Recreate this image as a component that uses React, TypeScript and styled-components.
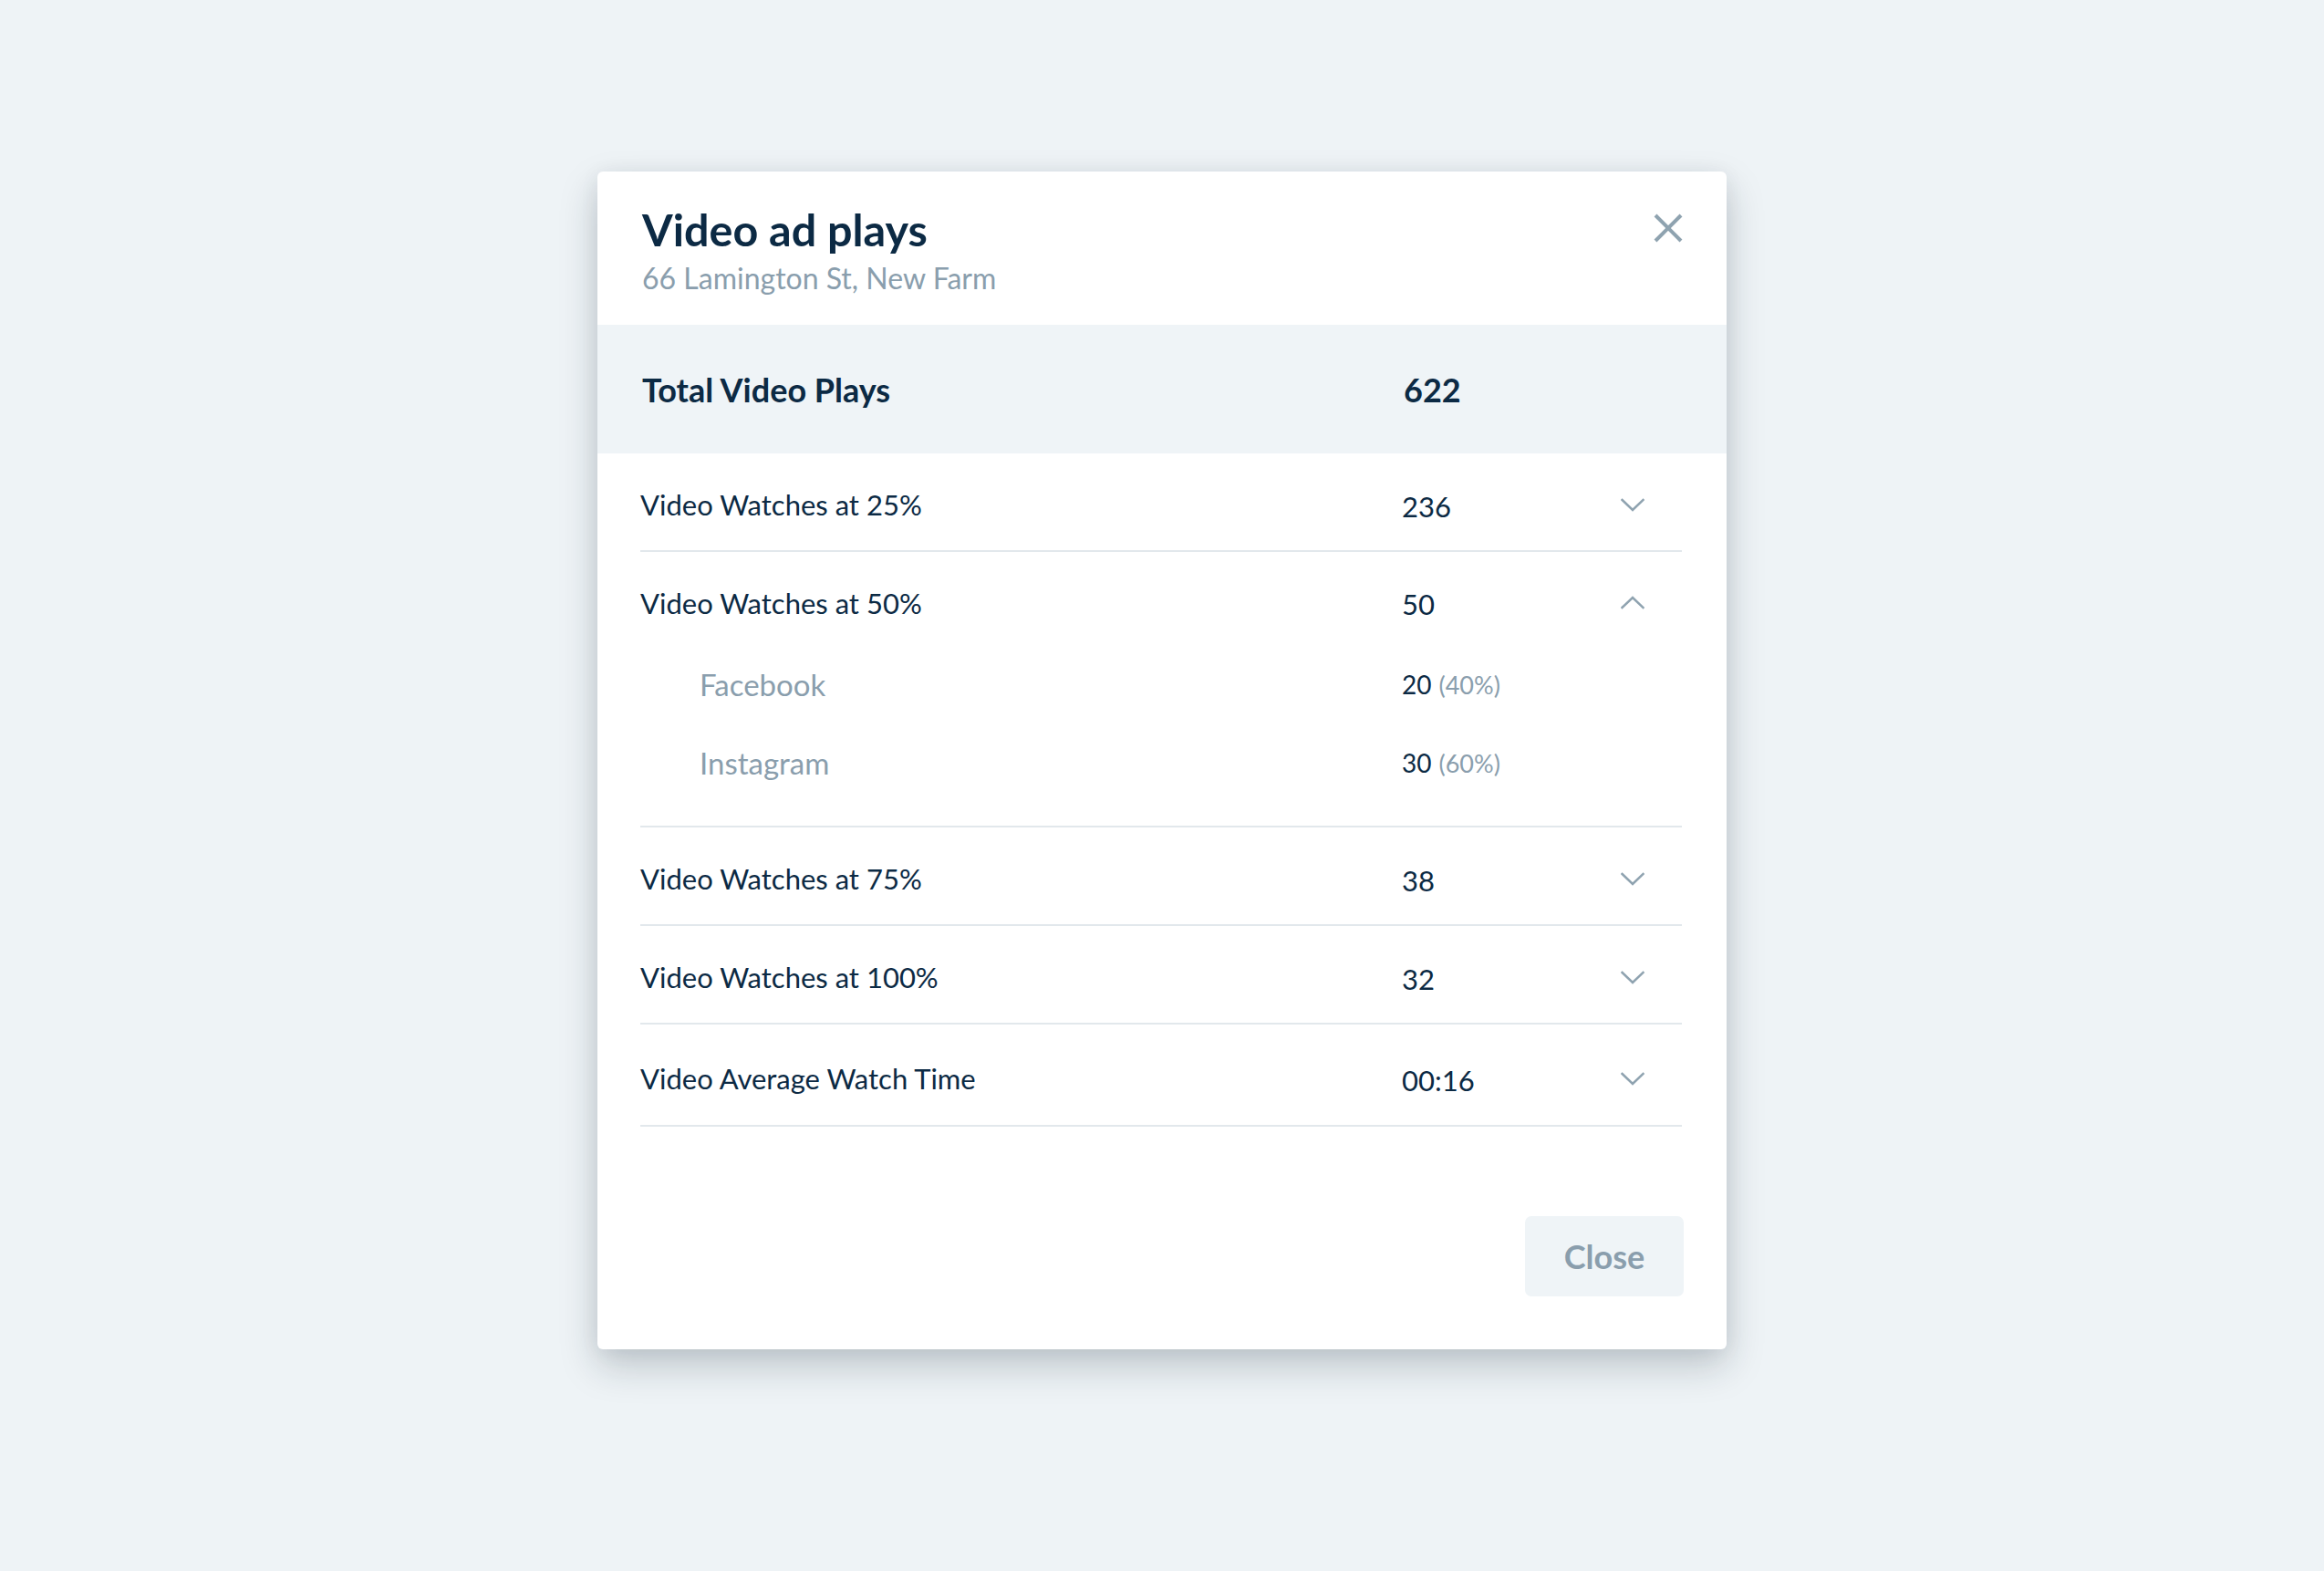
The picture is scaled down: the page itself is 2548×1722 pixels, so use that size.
import React from "react";
import styled, { createGlobalStyle } from "styled-components";

const GlobalStyle = createGlobalStyle`
  html, body {
    margin: 0;
    padding: 0;
    background: #eef3f6;
  }
  body {
    font-family: Lato, "Noto Sans", "Liberation Sans", sans-serif;
    -webkit-font-smoothing: antialiased;
  }
  * { box-sizing: border-box; }
`;

const navy = "#0c2a44";
const grey = "#8a9ead";
const iconGrey = "#8fa3b0";

const Page = styled.div`
  min-height: 1722px;
  display: flex;
  justify-content: center;
  align-items: flex-start;
  padding-top: 188px;
`;

const Modal = styled.div`
  width: 1238px;
  background: #ffffff;
  border-radius: 6px;
  overflow: hidden;
  display: flex;
  flex-direction: column;
  box-shadow: 0 18px 42px rgba(20, 35, 50, 0.22), 0 2px 22px rgba(20, 35, 50, 0.06);
`;

const Header = styled.div`
  display: flex;
  justify-content: space-between;
  align-items: flex-start;
  padding: 33px 48px 31px 49px;
`;

const TitleBlock = styled.div`
  display: flex;
  flex-direction: column;
`;

const Title = styled.h1`
  margin: 0;
  font-size: 48.5px;
  line-height: 60px;
  font-weight: 700;
  color: ${navy};
`;

const Subtitle = styled.div`
  margin-top: 4px;
  font-size: 32px;
  line-height: 40px;
  color: ${grey};
`;

const IconButton = styled.button`
  margin-top: 13px;
  width: 32px;
  height: 32px;
  padding: 0;
  border: none;
  background: transparent;
  cursor: pointer;
  display: flex;
`;

const TotalBand = styled.div`
  height: 141px;
  background: #eff4f7;
  padding: 0 48px 0 49px;
  display: grid;
  grid-template-columns: 835px 1fr;
  align-items: center;
  font-size: 36px;
  font-weight: 700;
  color: ${navy};
`;

const Rows = styled.div`
  padding: 0 49px 0 47px;
  display: flex;
  flex-direction: column;
`;

const RowLine = styled.div<{ $open?: boolean }>`
  height: ${(p) => (p.$open ? "102px" : "106px")};
  padding-top: ${(p) => (p.$open ? "9px" : "6px")};
  padding-right: 41px;
  display: grid;
  grid-template-columns: 835px 1fr 26px;
  align-items: center;
  font-size: 31px;
  color: ${navy};
`;

const RowBlock = styled.div<{ $open?: boolean }>`
  border-bottom: 2px solid #e2e8ec;
  display: flex;
  flex-direction: column;
  padding-bottom: ${(p) => (p.$open ? "26px" : "0")};

  &:last-child > ${RowLine} {
    height: 110px;
    padding-top: 8px;
  }
`;

const Label = styled.span``;

const Value = styled.span`
  padding-top: 3px;
`;

const SubRow = styled.div`
  height: 86px;
  padding-right: 41px;
  display: grid;
  grid-template-columns: 835px 1fr 26px;
  align-items: center;
`;

const SubLabel = styled.span`
  padding-left: 65px;
  font-size: 33px;
  color: ${grey};
`;

const SubValue = styled.span`
  display: flex;
  align-items: baseline;
  gap: 8px;
  font-size: 28px;
  color: ${navy};
`;

const Percent = styled.span`
  font-size: 27px;
  color: ${grey};
`;

const Chevron = styled.svg`
  display: block;
  width: 26px;
  height: 15px;
`;

const Footer = styled.div`
  display: flex;
  justify-content: flex-end;
  padding: 98px 47px 58px;
`;

const CloseButton = styled.button`
  width: 174px;
  height: 88px;
  border: none;
  border-radius: 7px;
  background: #eff4f7;
  color: ${grey};
  font-family: inherit;
  font-size: 36px;
  font-weight: 700;
  cursor: pointer;
`;

const ChevronIcon = ({ up }: { up?: boolean }) => (
  <Chevron viewBox="0 0 26 15" fill="none">
    <polyline
      points={up ? "1.5,13 13,2 24.5,13" : "1.5,2 13,13 24.5,2"}
      stroke={iconGrey}
      strokeWidth="2.6"
      strokeLinecap="square"
      strokeLinejoin="miter"
    />
  </Chevron>
);

const XIcon = () => (
  <svg width="32" height="32" viewBox="0 0 32 32" fill="none">
    <line x1="2" y1="2" x2="30" y2="30" stroke={iconGrey} strokeWidth="4" />
    <line x1="30" y1="2" x2="2" y2="30" stroke={iconGrey} strokeWidth="4" />
  </svg>
);

type RowData = {
  label: string;
  value: string;
  open?: boolean;
  subs?: { label: string; value: string; pct: string }[];
};

const rows: RowData[] = [
  { label: "Video Watches at 25%", value: "236" },
  {
    label: "Video Watches at 50%",
    value: "50",
    open: true,
    subs: [
      { label: "Facebook", value: "20", pct: "(40%)" },
      { label: "Instagram", value: "30", pct: "(60%)" },
    ],
  },
  { label: "Video Watches at 75%", value: "38" },
  { label: "Video Watches at 100%", value: "32" },
  { label: "Video Average Watch Time", value: "00:16" },
];

export default function App() {
  return (
    <>
      <GlobalStyle />
      <Page>
        <Modal>
          <Header>
            <TitleBlock>
              <Title>Video ad plays</Title>
              <Subtitle>66 Lamington St, New Farm</Subtitle>
            </TitleBlock>
            <IconButton aria-label="Close">
              <XIcon />
            </IconButton>
          </Header>
          <TotalBand>
            <span>Total Video Plays</span>
            <span>622</span>
          </TotalBand>
          <Rows>
            {rows.map((r) => (
              <RowBlock key={r.label} $open={r.open}>
                <RowLine $open={r.open}>
                  <Label>{r.label}</Label>
                  <Value>{r.value}</Value>
                  <ChevronIcon up={r.open} />
                </RowLine>
                {r.subs?.map((s) => (
                  <SubRow key={s.label}>
                    <SubLabel>{s.label}</SubLabel>
                    <SubValue>
                      {s.value}
                      <Percent>{s.pct}</Percent>
                    </SubValue>
                  </SubRow>
                ))}
              </RowBlock>
            ))}
          </Rows>
          <Footer>
            <CloseButton>Close</CloseButton>
          </Footer>
        </Modal>
      </Page>
    </>
  );
}
